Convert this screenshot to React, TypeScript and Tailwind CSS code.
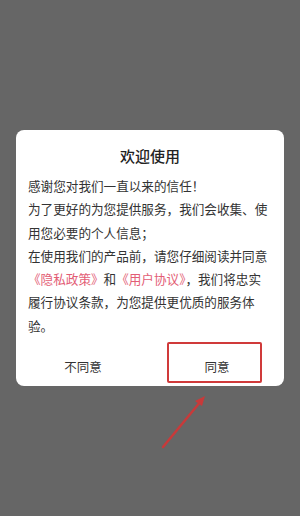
import React from 'react';

const FONT = { fontFamily: '"Noto Sans CJK SC", "Noto Sans", sans-serif' };

export default function App() {
  return (
    <div
      className="relative flex h-[516px] w-[300px] items-center justify-center overflow-hidden bg-[#666666]"
      style={FONT}
    >
      {/* Dialog */}
      <div className="flex w-[268px] flex-col rounded-[8px] bg-white pt-[16px]">
        <h2 className="text-center text-[15px] font-medium leading-[20px] text-[#222]">欢迎使用</h2>
        <div className="mt-[8px] px-[12px] text-[12.6px] leading-[23.3px] text-[#333]">
          <p>感谢您对我们一直以来的信任！</p>
          <p>为了更好的为您提供服务，我们会收集、使用您必要的个人信息；</p>
          <p>
            在使用我们的产品前，请您仔细阅读并同意<span className="text-[#e35d75]">《隐私政策》</span>和<span className="text-[#e35d75]">《用户协议》</span>，我们将忠实履行协议条款，为您提供更优质的服务体验。
          </p>
        </div>
        <div className="mt-[11px] flex h-[38px]">
          <button className="flex-1 text-[12.5px] text-[#333]">不同意</button>
          <button className="flex-1 text-[12.5px] text-[#333]">同意</button>
        </div>
      </div>

      {/* Annotation: highlight box */}
      <div className="absolute left-[167px] top-[342px] h-[41px] w-[95px] rounded-[2px] border-2 border-[#d03a3a]" />

      {/* Annotation: arrow */}
      <svg className="absolute left-0 top-0" width="300" height="516" viewBox="0 0 300 516">
        <line x1="163" y1="447" x2="201" y2="401" stroke="#c83a3a" strokeWidth="2.5" strokeLinecap="round" />
        <polygon points="205,396 195,401 202,406" fill="#c83a3a" />
      </svg>
    </div>
  );
}
